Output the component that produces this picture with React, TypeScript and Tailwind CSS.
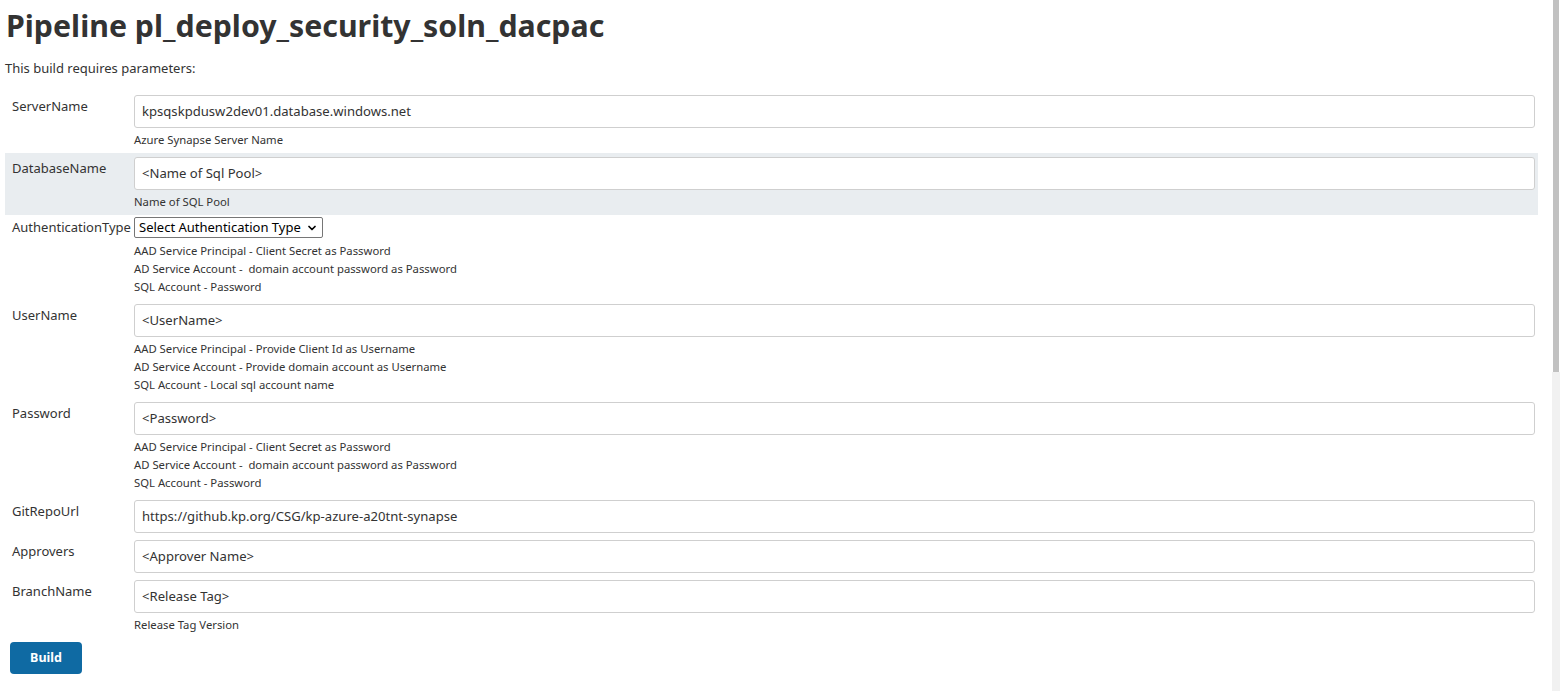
import { ChevronDown } from "lucide-react";

interface Param {
  name: string;
  value: string;
  help: string[];
  highlight?: boolean;
  select?: boolean;
}

const params: Param[] = [
  { name: "ServerName", value: "kpsqskpdusw2dev01.database.windows.net", help: ["Azure Synapse Server Name"] },
  { name: "DatabaseName", value: "<Name of Sql Pool>", help: ["Name of SQL Pool"], highlight: true },
  {
    name: "AuthenticationType",
    value: "Select Authentication Type",
    select: true,
    help: [
      "AAD Service Principal - Client Secret as Password",
      "AD Service Account -  domain account password as Password",
      "SQL Account - Password",
    ],
  },
  {
    name: "UserName",
    value: "<UserName>",
    help: [
      "AAD Service Principal - Provide Client Id as Username",
      "AD Service Account - Provide domain account as Username",
      "SQL Account - Local sql account name",
    ],
  },
  {
    name: "Password",
    value: "<Password>",
    help: [
      "AAD Service Principal - Client Secret as Password",
      "AD Service Account -  domain account password as Password",
      "SQL Account - Password",
    ],
  },
  { name: "GitRepoUrl", value: "https://github.kp.org/CSG/kp-azure-a20tnt-synapse", help: [] },
  { name: "Approvers", value: "<Approver Name>", help: [] },
  { name: "BranchName", value: "<Release Tag>", help: ["Release Tag Version"] },
];

function ParamRow({ p }: { p: Param }) {
  return (
    <div
      className={`flex ${p.select ? "pt-[2px]" : "pt-[4px]"} ${p.help.length ? "pb-[4px]" : "pb-[3px]"} ${
        p.highlight ? "bg-[#e9edf0]" : ""
      }`}
    >
      <div
        className={`w-[129px] shrink-0 pl-[7px] text-[13px] leading-[18px] text-[#333] whitespace-nowrap ${
          p.select ? "pt-[1px]" : "pt-[2px]"
        }`}
      >
        {p.name}
      </div>
      <div className="flex-1 pr-[3px] min-w-0">
        {p.select ? (
          <div className="flex items-center w-[189px] h-[21px] border border-[#767676] rounded-[2px] bg-white pl-[4px] pr-[4px] text-[13px] text-black whitespace-nowrap">
            <span className="flex-1">{p.value}</span>
            <ChevronDown size={12} strokeWidth={3.5} />
          </div>
        ) : (
          <div className="flex items-center h-[33px] border border-[#cfcfcf] rounded-[3px] bg-white pl-[7px] text-[13.1px] text-[#333] whitespace-nowrap">
            {p.value}
          </div>
        )}
        {p.help.length > 0 && (
          <div className={`${p.select ? "mt-[4px]" : "mt-[3px]"} text-[11.3px] leading-[18px] text-[#333]`}>
            {p.help.map((h, i) => (
              <div key={i} className="whitespace-pre">
                {h}
              </div>
            ))}
          </div>
        )}
      </div>
    </div>
  );
}

export default function App() {
  return (
    <div className="flex w-[1560px] h-[691px] bg-white overflow-hidden font-['Noto_Sans',sans-serif]">
      <div className="flex-1 pl-[5px] pr-[14px]">
        <h1 className="pt-[6px] text-[30.3px] leading-[40px] font-bold text-[#333] pl-[1px]">
          Pipeline pl_deploy_security_soln_dacpac
        </h1>
        <p className="mt-[13px] text-[13px] leading-[18px] text-[#333]">This build requires parameters:</p>
        <div className="mt-[14px]">
          {params.map((p) => (
            <ParamRow key={p.name} p={p} />
          ))}
        </div>
        <button className="mt-[4px] ml-[5px] w-[72px] h-[32px] rounded-[4px] bg-[#0f6aa3] text-white text-[12.5px] font-bold">
          Build
        </button>
      </div>
      <div className="w-[8px] flex flex-col">
        <div className="h-[372px] w-[6px] bg-[#c1c1c1] ml-[1px]" />
        <div className="flex-1 bg-[#f1f1f1]" />
      </div>
    </div>
  );
}
